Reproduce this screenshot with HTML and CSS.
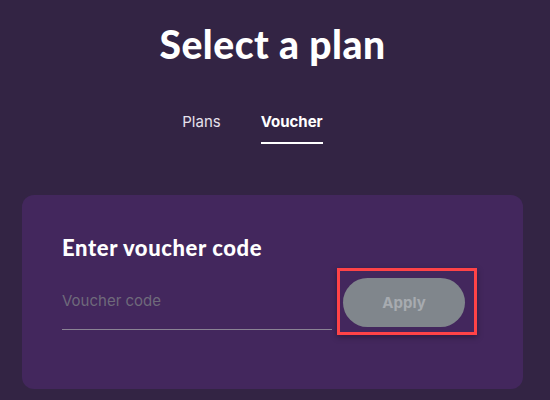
FILE: index.html
```html
<!DOCTYPE html>
<html lang="en">
<head>
    <meta charset="UTF-8">
    <meta name="viewport" content="width=device-width, initial-scale=1.0">
    <title>Select a plan</title>
    <link rel="stylesheet" href="styles.css">
</head>
<body>
    <div class="page">
        <h1 class="page-title">Select a plan</h1>

        <div class="tabs">
            <div class="tab">Plans</div>
            <div class="tab active">Voucher</div>
        </div>

        <div class="voucher-card">
            <h2>Enter voucher code</h2>
            <div class="voucher-row">
                <input type="text" class="voucher-input" placeholder="Voucher code">
                <div class="highlight">
                    <button class="apply-button" disabled>Apply</button>
                </div>
            </div>
        </div>
    </div>
</body>
</html>
```

FILE: styles.css
```css
body {
    margin: 0;
    background-color: #332444;
    font-family: 'Inter', 'Roboto', sans-serif;
    color: white;
}

.page {
    padding: 22px 27px 0 22px;
}

.page-title {
    margin: 0;
    text-align: center;
    font-family: 'Lato', sans-serif;
    font-weight: 900;
    font-size: 39px;
    line-height: 44px;
    letter-spacing: 0.5px;
}

.tabs {
    display: flex;
    justify-content: center;
    gap: 40px;
    margin-top: 47px;
    padding-right: 40px;
}

.tab {
    font-size: 15px;
    line-height: 18px;
    padding-bottom: 11px;
    color: #e6e1ec;
}

.tab.active {
    font-weight: 700;
    color: white;
    border-bottom: 2px solid white;
}

.voucher-card {
    margin-top: 51px;
    background-color: #43275d;
    border-radius: 12px;
    padding: 40px 40px 54px 40px;
}

.voucher-card h2 {
    margin: 0;
    font-family: 'Lato', sans-serif;
    font-weight: 900;
    font-size: 22px;
    line-height: 26px;
    letter-spacing: 0.6px;
}

.voucher-row {
    display: flex;
    align-items: flex-start;
    margin-top: 7px;
}

.voucher-input {
    width: 270px;
    background: transparent;
    border: none;
    border-bottom: 1px solid #8a8394;
    padding: 24px 0 19px;
    font-family: 'Inter', sans-serif;
    font-size: 15px;
    line-height: 18px;
    color: white;
    outline: none;
}

.voucher-input::placeholder {
    color: #6f6a7b;
}

.highlight {
    margin-left: 5px;
    padding: 7px 9px 5px 3px;
    border: 3px solid #ff4347;
    box-shadow: 0 2px 6px rgba(0, 0, 0, 0.35);
}

.apply-button {
    display: block;
    width: 122px;
    height: 49px;
    border: none;
    border-radius: 25px;
    background-color: #80868c;
    color: #a7abb0;
    font-family: 'Inter', sans-serif;
    font-weight: 700;
    font-size: 15px;
}
```
